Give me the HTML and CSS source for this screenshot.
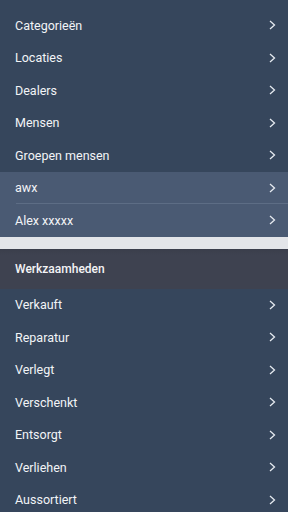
FILE: index.html
```html
<!DOCTYPE html>
<html lang="nl">
<head>
  <meta charset="UTF-8" />
  <meta name="viewport" content="width=device-width, initial-scale=1.0"/>
  <title>Menu</title>
  <link rel="stylesheet" href="styles.css">
</head>
<body>

  <ul class="menu top">
    <li class="item">Categorieën<svg class="chev" viewBox="0 0 7 10"><path d="M1 1l4.5 4-4.5 4"/></svg></li>
    <li class="item">Locaties<svg class="chev" viewBox="0 0 7 10"><path d="M1 1l4.5 4-4.5 4"/></svg></li>
    <li class="item">Dealers<svg class="chev" viewBox="0 0 7 10"><path d="M1 1l4.5 4-4.5 4"/></svg></li>
    <li class="item">Mensen<svg class="chev" viewBox="0 0 7 10"><path d="M1 1l4.5 4-4.5 4"/></svg></li>
    <li class="item">Groepen mensen<svg class="chev" viewBox="0 0 7 10"><path d="M1 1l4.5 4-4.5 4"/></svg></li>
    <li class="item active line">awx<svg class="chev" viewBox="0 0 7 10"><path d="M1 1l4.5 4-4.5 4"/></svg></li>
    <li class="item active">Alex xxxxx<svg class="chev" viewBox="0 0 7 10"><path d="M1 1l4.5 4-4.5 4"/></svg></li>
  </ul>

  <div class="spacer"></div>

  <div class="section-title">Werkzaamheden</div>

  <ul class="menu">
    <li class="item">Verkauft<svg class="chev" viewBox="0 0 7 10"><path d="M1 1l4.5 4-4.5 4"/></svg></li>
    <li class="item">Reparatur<svg class="chev" viewBox="0 0 7 10"><path d="M1 1l4.5 4-4.5 4"/></svg></li>
    <li class="item">Verlegt<svg class="chev" viewBox="0 0 7 10"><path d="M1 1l4.5 4-4.5 4"/></svg></li>
    <li class="item">Verschenkt<svg class="chev" viewBox="0 0 7 10"><path d="M1 1l4.5 4-4.5 4"/></svg></li>
    <li class="item">Entsorgt<svg class="chev" viewBox="0 0 7 10"><path d="M1 1l4.5 4-4.5 4"/></svg></li>
    <li class="item">Verliehen<svg class="chev" viewBox="0 0 7 10"><path d="M1 1l4.5 4-4.5 4"/></svg></li>
    <li class="item">Aussortiert<svg class="chev" viewBox="0 0 7 10"><path d="M1 1l4.5 4-4.5 4"/></svg></li>
  </ul>

</body>
</html>
```

FILE: styles.css
```css
* {
  box-sizing: border-box;
}

body {
  font-family: Roboto, "Noto Sans", sans-serif;
  margin: 0;
  padding: 0;
  background: #36465c;
  color: #f2f4f7;
  overflow: hidden;
}

.menu {
  list-style: none;
  margin: 0;
  padding: 0;
}

.menu.top {
  padding-top: 9px;
}

.item {
  height: 32.5px;
  display: flex;
  align-items: center;
  justify-content: space-between;
  padding: 0 12px 0 15px;
  font-size: 12.5px;
  position: relative;
}

.item.active {
  background: #4a5a73;
}

.item.line::after {
  content: '';
  position: absolute;
  left: 16px;
  right: 0;
  bottom: 0;
  height: 1px;
  background: #5d6d85;
}

.chev {
  width: 7px;
  height: 10px;
  fill: none;
  stroke: #e6eaf0;
  stroke-width: 1.3;
}

.spacer {
  height: 12px;
  background: #e3e5e9;
}

.section-title {
  height: 40px;
  display: flex;
  align-items: center;
  padding: 0 15px;
  background: linear-gradient(#3a3e4b, #3e4250 6px);
  font-size: 12px;
  font-weight: 500;
  color: #f4f4f6;
}
```
